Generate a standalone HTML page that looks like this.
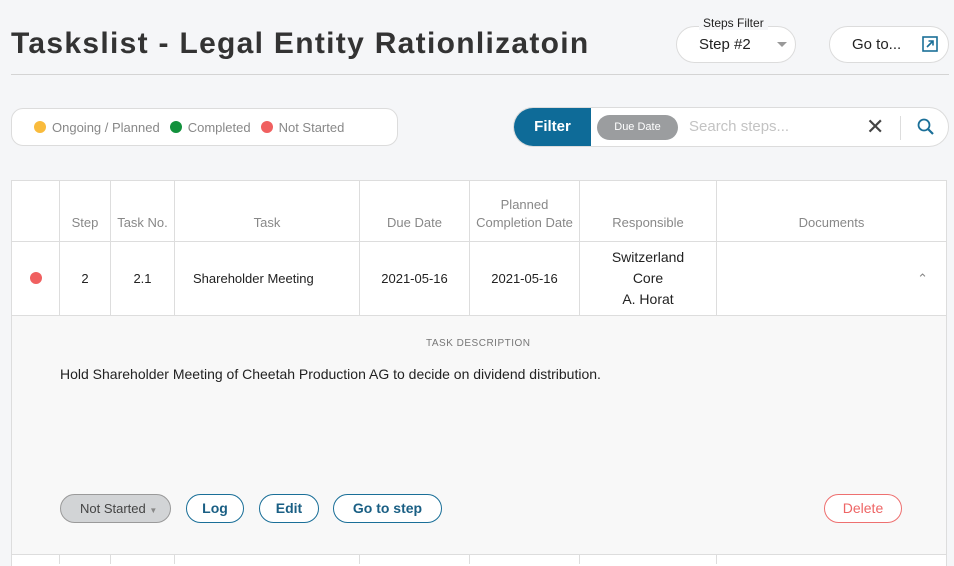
<!DOCTYPE html>
<html><head><meta charset="utf-8"><style>
*{box-sizing:border-box;margin:0;padding:0}
body{width:954px;height:563px;overflow:hidden;background:#f5f6f8;font-family:"Liberation Sans",sans-serif;position:relative;color:#222}
.abs{position:absolute}
h1{position:absolute;left:11px;top:27px;font-size:30px;font-weight:bold;color:#333;letter-spacing:1.3px;white-space:nowrap}
.hr{left:11px;top:74px;width:938px;height:1px;background:#d4d4d4}
.pill{position:absolute;background:#fff;border:1px solid #dcdcdc;border-radius:20px}
.dot{display:inline-block;width:12px;height:12px;border-radius:50%;vertical-align:-1px;margin-right:6px}
.leg{font-size:13px;color:#888;margin-right:10px}
table{position:absolute;left:11px;top:180px;width:936px;border-collapse:collapse;background:#fff}
td,th{border:1px solid #ddd;text-align:center;font-size:13px}
th{font-weight:normal;color:#888;height:61px;padding-bottom:9px;line-height:18px;vertical-align:bottom}
td{height:74px;color:#222}
.btn{position:absolute;top:494px;height:29px;border:1.5px solid #1a6f98;border-radius:15px;color:#1a5f84;font-weight:bold;font-size:14px;text-align:center;line-height:26px;background:#fff}
</style></head><body>
<h1>Taskslist - Legal Entity Rationlizatoin</h1>
<div class="abs hr"></div>
<div class="pill" style="left:676px;top:26px;width:120px;height:37px"></div>
<div class="abs" style="left:699px;top:16px;background:#f5f6f8;padding:0 4px;font-size:12px;color:#222">Steps Filter</div>
<div class="abs" style="left:699px;top:36px;font-size:15px">Step #2</div>
<div class="abs" style="left:777px;top:42px;width:0;height:0;border-left:5px solid transparent;border-right:5px solid transparent;border-top:5px solid #999"></div>
<div class="pill" style="left:829px;top:26px;width:120px;height:37px"></div>
<div class="abs" style="left:852px;top:36px;font-size:15px">Go to...</div>
<svg class="abs" style="left:922px;top:36px" width="16" height="16" viewBox="0 0 16 16"><rect x="1" y="1" width="14" height="14" fill="none" stroke="#1a6f98" stroke-width="1.6"/><path d="M5 11 L11 5 M6.5 5 H11 V9.5" fill="none" stroke="#1a6f98" stroke-width="1.6"/></svg>

<div class="pill" style="left:11px;top:108px;width:387px;height:38px;border-radius:12px;padding:10px 0 0 22px;white-space:nowrap">
<span class="dot" style="background:#f9bb3c"></span><span class="leg">Ongoing / Planned</span><span class="dot" style="background:#12913c"></span><span class="leg">Completed</span><span class="dot" style="background:#f06060"></span><span class="leg">Not Started</span></div>

<div class="pill" style="left:513px;top:107px;width:436px;height:40px;overflow:hidden">
<div class="abs" style="left:0;top:0;width:77px;height:38px;background:#0e6b98;color:#fff;font-size:15px;font-weight:bold;line-height:38px;text-align:center">Filter</div>
<div class="abs" style="left:83px;top:7px;width:81px;height:25px;border-radius:13px;background:#9b9d9f;color:#fff;font-size:11px;line-height:25px;text-align:center">Due Date</div>
<div class="abs" style="left:175px;top:10px;font-size:15px;color:#c3c3c3">Search steps...</div>
<div class="abs" style="left:352px;top:6px;font-size:22px;color:#444">✕</div>
<div class="abs" style="left:386px;top:8px;width:1px;height:24px;background:#ddd"></div>
<svg class="abs" style="left:402px;top:9px" width="20" height="20" viewBox="0 0 20 20"><circle cx="8" cy="8" r="5.5" fill="none" stroke="#1a6f98" stroke-width="1.8"/><path d="M12 12 L17 17" stroke="#1a6f98" stroke-width="2.2"/></svg>
</div>

<table>
<tr><th style="width:48px"></th><th style="width:51px">Step</th><th style="width:64px">Task No.</th><th style="width:185px">Task</th><th style="width:110px">Due Date</th><th style="width:110px">Planned<br>Completion Date</th><th style="width:137px">Responsible</th><th>Documents</th></tr>
<tr><td><span class="dot" style="background:#f06060;margin:0"></span></td><td>2</td><td>2.1</td><td style="text-align:left;padding-left:18px">Shareholder Meeting</td><td>2021-05-16</td><td>2021-05-16</td><td style="font-size:14px;line-height:21px">Switzerland<br>Core<br>A. Horat</td><td style="text-align:right;padding-right:18px;color:#888">&#8963;</td></tr>
</table>
<div class="abs" style="left:11px;top:315px;width:936px;height:240px;background:#f8f8f8;border:1px solid #ddd"></div>
<div class="abs" style="left:11px;top:554px;width:936px;height:12px;background:#fff;border-top:1px solid #ddd;border-left:1px solid #ddd;border-right:1px solid #ddd"></div>
<div class="abs" style="left:59px;top:554px;width:1px;height:10px;background:#ddd"></div>
<div class="abs" style="left:110px;top:554px;width:1px;height:10px;background:#ddd"></div>
<div class="abs" style="left:174px;top:554px;width:1px;height:10px;background:#ddd"></div>
<div class="abs" style="left:359px;top:554px;width:1px;height:10px;background:#ddd"></div>
<div class="abs" style="left:469px;top:554px;width:1px;height:10px;background:#ddd"></div>
<div class="abs" style="left:579px;top:554px;width:1px;height:10px;background:#ddd"></div>
<div class="abs" style="left:716px;top:554px;width:1px;height:10px;background:#ddd"></div>
<div class="abs" style="left:426px;top:338px;font-size:10px;color:#777;letter-spacing:0.5px">TASK DESCRIPTION</div>
<div class="abs" style="left:60px;top:366px;font-size:14px;color:#222">Hold Shareholder Meeting of Cheetah Production AG to decide on dividend distribution.</div>
<div class="abs" style="left:60px;top:494px;width:111px;height:29px;border:1px solid #9a9a9a;border-radius:15px;background:#d2d4d6;font-size:13px;color:#444;line-height:27px;padding-left:19px">Not Started <span style="font-size:8px;color:#888">▼</span></div>
<div class="btn" style="left:186px;width:58px">Log</div>
<div class="btn" style="left:259px;width:60px">Edit</div>
<div class="btn" style="left:333px;width:109px">Go to step</div>
<div class="btn" style="left:824px;width:78px;border-color:#ee7070;color:#ee6565;font-weight:normal">Delete</div>
</body></html>
